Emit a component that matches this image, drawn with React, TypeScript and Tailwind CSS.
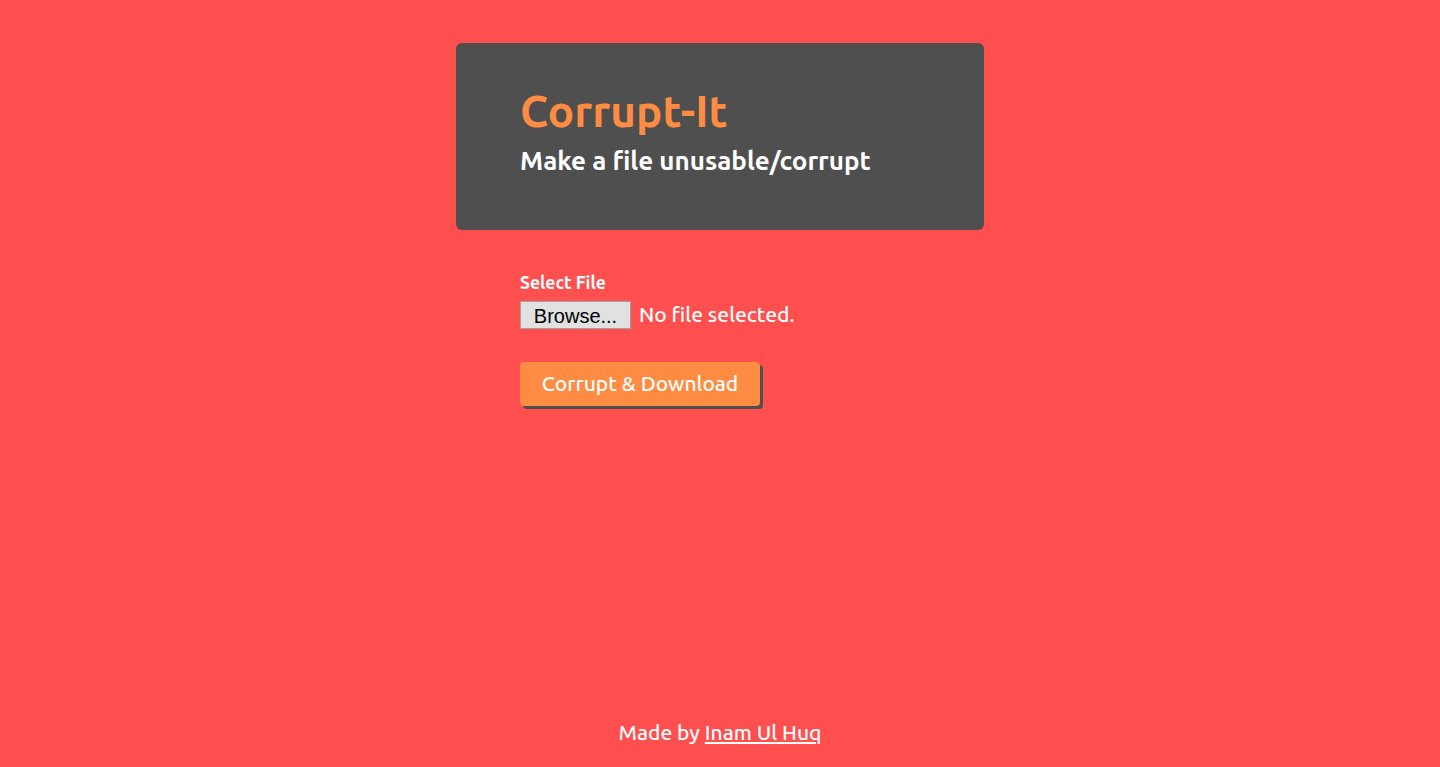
const App = () => {
  return (
    <div className="min-h-screen bg-[#ff4f4f] flex flex-col items-center font-['Ubuntu','Noto_Sans',sans-serif] font-medium text-white">
      <div className="w-[528px] mt-[43px]">
        {/* Header card */}
        <div className="bg-[#4f4f4f] rounded-md h-[187px] px-16 pt-[38px]">
          <h1 className="text-[44px] leading-[60px] font-bold text-[#ff8c42]">Corrupt-It</h1>
          <h2 className="text-[26px] leading-[32px] font-bold mt-[4px]">Make a file unusable/corrupt</h2>
        </div>

        {/* Form */}
        <div className="px-16 pt-[42px]">
          <label className="block text-[17.5px] leading-[22px] font-bold">Select File</label>
          <div className="flex items-center mt-[5px]">
            <span className="bg-[#e1e1e1] border border-[#a0a0a0] h-[28px] w-[111px] flex items-center justify-center pt-[2px] text-black text-[20px] font-normal font-['Liberation_Sans',sans-serif] leading-none">
              Browse...
            </span>
            <span className="ml-[8px] text-[21px]">No file selected.</span>
          </div>
          <button className="mt-[31px] bg-[#ff8c42] rounded-[4px] h-[44px] w-[240px] text-[21px] text-white shadow-[3px_3px_0_#4f4f4f]">
            Corrupt &amp; Download
          </button>
        </div>
      </div>

      <footer className="mt-auto mb-[19px] text-[21px]">
        Made by <a href="#" className="underline">Inam Ul Huq</a>
      </footer>
    </div>
  );
};

export default App;
